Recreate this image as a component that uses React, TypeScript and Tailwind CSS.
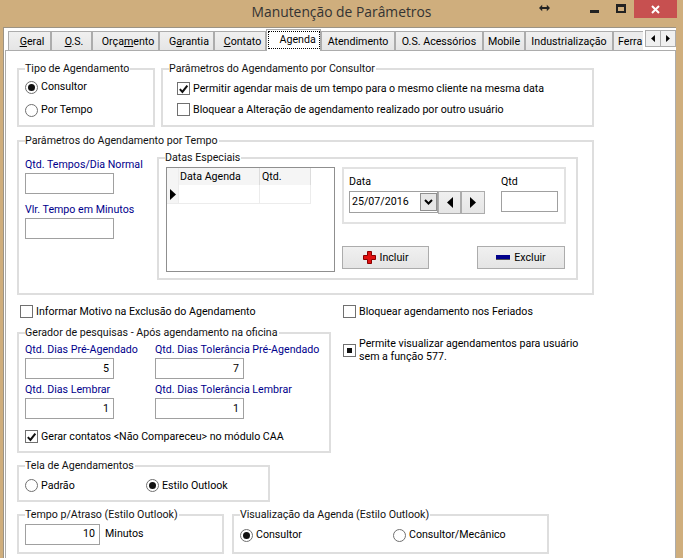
import type { ReactNode } from 'react';

const tabs = [
  { label: 'Geral', u: 0, w: 'w-[43px]' },
  { label: 'O.S.', u: 0, w: 'w-[41px]' },
  { label: 'Orçamento', u: 4, w: 'w-[67px]' },
  { label: 'Garantia', u: 1, w: 'w-[55px]' },
  { label: 'Contato', u: 0, w: 'w-[52px]' },
];
const tabsAfter = [
  { label: 'Atendimento', w: 'w-[74px]' },
  { label: 'O.S. Acessórios', w: 'w-[88px]' },
  { label: 'Mobile', w: 'w-[42px]' },
  { label: 'Industrialização', w: 'w-[88px]' },
];

function Tab({ label, u, w }: { label: string; u?: number; w: string }) {
  return (
    <div className={`${w} flex h-[19px] shrink-0 items-center justify-center border border-b-0 border-[#acacac] bg-gradient-to-b from-[#f0f0f0] to-[#e5e5e5] pt-px whitespace-nowrap`}>
      {u === undefined ? (
        label
      ) : (
        <span className="pl-[5px]">
          {label.slice(0, u)}
          <span className="underline">{label[u]}</span>
          {label.slice(u + 1)}
        </span>
      )}
    </div>
  );
}

function Group({ title, className, children }: { title: string; className: string; children?: ReactNode }) {
  return (
    <div className={`relative shrink-0 border-2 border-[#dedede] ${className}`}>
      <span className="absolute left-[6px] top-[-8px] bg-white pr-px leading-[14px] whitespace-nowrap text-[#111]">{title}</span>
      {children}
    </div>
  );
}

function Check({ checked, mark, label, className = '' }: { checked?: boolean; mark?: boolean; label: ReactNode; className?: string }) {
  return (
    <div className={`flex items-center gap-[3px] ${className}`}>
      <span className="flex h-[13px] w-[13px] shrink-0 items-center justify-center border border-[#707070] bg-white">
        {checked && (
          <svg viewBox="0 0 12 12" className="h-[12px] w-[12px]">
            <path d="M2 6.2 L4.8 9.2 L10.2 2.2" fill="none" stroke="#111" strokeWidth="2.2" />
          </svg>
        )}
        {mark && <span className="h-[5px] w-[5px] bg-[#111]" />}
      </span>
      <span className="leading-[13px]">{label}</span>
    </div>
  );
}

function Radio({ checked, label, className = '' }: { checked?: boolean; label: string; className?: string }) {
  return (
    <div className={`flex items-center gap-[3px] ${className}`}>
      <span className="flex h-[13px] w-[13px] shrink-0 items-center justify-center rounded-full border border-[#707070] bg-white">
        {checked && <span className="h-[7px] w-[7px] rounded-full bg-[#111]" />}
      </span>
      <span className="leading-[14px] whitespace-nowrap">{label}</span>
    </div>
  );
}

function Field({ label, value, className = '' }: { label: string; value?: string; className?: string }) {
  return (
    <div className={`flex flex-col ${className}`}>
      <span className="h-[14px] leading-[14px] whitespace-nowrap text-[#00008b]">{label}</span>
      <div className="mt-px flex h-[21px] w-[89px] items-center justify-end border border-[#a0a0a0] bg-white pr-[4px]">{value}</div>
    </div>
  );
}

function Arrow({ dir, size = 'h-[11px] w-[6px]' }: { dir: 'left' | 'right'; size?: string }) {
  return (
    <svg viewBox="0 0 6 11" className={size}>
      <path d={dir === 'left' ? 'M6 0 L0 5.5 L6 11 Z' : 'M0 0 L6 5.5 L0 11 Z'} fill="#000" />
    </svg>
  );
}

const btn = 'flex items-center justify-center border border-[#acacac] bg-gradient-to-b from-[#f0f0f0] to-[#e5e5e5]';

export default function App() {
  return (
    <div className="h-[558px] w-[683px] overflow-hidden bg-[#cfae7d] text-[10.65px] text-black [font-family:Roboto,sans-serif]">
      {/* title bar */}
      <div className="relative flex h-[27px] items-center justify-center pb-[2px]">
        <span className="text-[13.85px] text-[#333] [font-family:'Open_Sans',sans-serif]">Manutenção de Parâmetros</span>
        <svg viewBox="0 0 12 8" className="absolute left-[539px] top-[4px] h-[8px] w-[11px]">
          <path d="M0 4 L3.5 0.5 V3 H8.5 V0.5 L12 4 L8.5 7.5 V5 H3.5 V7.5 Z" fill="#222" />
        </svg>
        <span className="absolute left-[590px] top-[10px] h-[3px] w-[9px] bg-[#222]" />
        <span className="absolute left-[616px] top-[4px] h-[9px] w-[10px] border-2 border-t-[3px] border-[#222]" />
        <div className="absolute left-[634px] top-0 flex h-[18px] w-[43px] items-center justify-center bg-[#c75050]">
          <svg viewBox="0 0 9 9" className="h-[9px] w-[9px]">
            <path d="M1 1 L8 8 M8 1 L1 8" stroke="#fff" strokeWidth="2" />
          </svg>
        </div>
      </div>

      {/* client area */}
      <div className="ml-[3px] mr-[7px] h-[531px] border-l border-t border-[#9c9384] bg-white pl-[1px]">
        <div className="relative flex h-[22px] items-end pl-[3px]">
          {tabs.map(t => (
            <Tab key={t.label} {...t} />
          ))}
          <div className="relative z-10 mb-[-1px] flex h-[22px] w-[55px] shrink-0 items-start justify-center border border-b-0 border-[#acacac] bg-white pt-px">
            <span className="h-[18px] w-[52px] border border-dotted border-black pl-[11px] leading-[15px]">Agenda</span>
          </div>
          {tabsAfter.map(t => (
            <Tab key={t.label} {...t} />
          ))}
          <div className="flex h-[19px] w-[30px] shrink-0 items-center overflow-hidden border-t border-l border-[#acacac] bg-[#ececec] pl-[4px] pt-px">Ferra</div>
          <div className="absolute right-[15px] top-[2px] flex h-[17px] w-[16px] items-center justify-center border border-[#acacac] bg-[#f0f0f0]">
            <Arrow dir="left" size="h-[7px] w-[4px]" />
          </div>
          <div className="absolute right-0 top-[2px] flex h-[17px] w-[16px] items-center justify-center border border-[#acacac] bg-[#f0f0f0]">
            <Arrow dir="right" size="h-[7px] w-[4px]" />
          </div>
        </div>

        {/* tab page */}
        <div className="flex h-[509px] flex-col border-l border-r border-t border-[#acacac] pl-[11px] pt-[17px]">
          <div className="flex gap-[6px]">
            <Group title="Tipo de Agendamento" className="h-[59px] w-[138px] pl-[6px] pt-[10px]">
              <Radio checked label="Consultor" />
              <Radio label="Por Tempo" className="mt-[9px]" />
            </Group>
            <Group title="Parâmetros do Agendamento por Consultor" className="h-[59px] w-[433px] pl-[14px] pt-[12px]">
              <Check checked label="Permitir agendar mais de um tempo para o mesmo cliente na mesma data" />
              <Check label="Bloquear a Alteração de agendamento realizado por outro usuário" className="mt-[8px]" />
            </Group>
          </div>

          <Group title="Parâmetros do Agendamento por Tempo" className="mt-[13px] flex h-[155px] w-[577px] pl-[6px]">
            <div className="flex w-[132px] shrink-0 flex-col gap-[9px] pt-[16px]">
              <Field label="Qtd. Tempos/Dia Normal" />
              <Field label="Vlr. Tempo em Minutos" />
            </div>
            <Group title="Datas Especiais" className="mt-[15px] flex h-[123px] w-[421px] pl-[7px] pt-[8px]">
              <div className="h-[105px] w-[169px] shrink-0 border border-[#8f8f8f] bg-white">
                <div className="grid w-[144px] grid-cols-[12px_81px_51px] border-b border-[#ececec]">
                  <div className="h-[17px] border-r border-[#ececec] bg-[#f5f5f5]" />
                  <div className="h-[17px] border-r border-[#dcdcdc] bg-[#f5f5f5] pl-px leading-[17px]">Data Agenda</div>
                  <div className="h-[17px] border-r border-[#dcdcdc] bg-[#f5f5f5] pl-[2px] leading-[17px]">Qtd.</div>
                  <div className="flex h-[18px] items-center justify-center border-r border-[#ececec] bg-[#f5f5f5]">
                    <Arrow dir="right" />
                  </div>
                  <div className="h-[18px] border-r border-[#ececec]" />
                  <div className="h-[18px] border-r border-[#ececec]" />
                </div>
              </div>
              <div className="ml-[7px] flex w-[224px] shrink-0 flex-col">
                <div className="flex h-[57px] border-2 border-[#e2e2e2] pl-[5px] pt-[6px]">
                  <div className="flex w-[136px] shrink-0 flex-col">
                    <span className="h-[14px] leading-[14px]">Data</span>
                    <div className="mt-[2px] flex">
                      <div className="flex h-[22px] w-[89px] items-center justify-between border border-[#a0a0a0] pl-[2px]">
                        25/07/2016
                        <span className="flex h-[18px] w-[17px] items-center justify-center border border-[#8f8f8f] bg-[#e6e6e6]">
                          <svg viewBox="0 0 9 6" className="h-[6px] w-[9px]">
                            <path d="M1 1 L4.5 4.5 L8 1" fill="none" stroke="#000" strokeWidth="2" />
                          </svg>
                        </span>
                      </div>
                      <div className={`${btn} h-[23px] w-[23px]`}>
                        <Arrow dir="left" />
                      </div>
                      <div className={`${btn} h-[23px] w-[24px]`}>
                        <Arrow dir="right" />
                      </div>
                    </div>
                  </div>
                  <div className="ml-[16px] flex flex-col">
                    <span className="h-[14px] leading-[14px]">Qtd</span>
                    <div className="mt-[2px] h-[21px] w-[57px] border border-[#a0a0a0] bg-white" />
                  </div>
                </div>
                <div className="mt-[22px] flex justify-between pr-px">
                  <div className={`${btn} h-[23px] w-[87px] gap-[4px]`}>
                    <svg viewBox="0 0 13 13" className="h-[13px] w-[13px]">
                      <path d="M4.5 0.5 H8.5 V4.5 H12.5 V8.5 H8.5 V12.5 H4.5 V8.5 H0.5 V4.5 H4.5 Z" fill="#e01010" stroke="#8a0000" />
                    </svg>
                    Incluir
                  </div>
                  <div className={`${btn} h-[23px] w-[88px] gap-[4px]`}>
                    <span className="h-[5px] w-[14px] border-b border-[#555] bg-[#00008b]" />
                    Excluir
                  </div>
                </div>
              </div>
            </Group>
          </Group>

          <div className="mt-[10px] flex">
            <div className="flex w-[326px] shrink-0 flex-col">
              <Check label="Informar Motivo na Exclusão do Agendamento" className="ml-[3px]" />
              <Group title="Gerador de pesquisas - Após agendamento na oficina" className="mt-[14px] h-[121px] w-[314px] pl-[6px] pt-[9px]">
                <div className="grid w-[290px] grid-cols-[130px_160px] gap-y-[4px]">
                  <Field label="Qtd. Dias Pré-Agendado" value="5" />
                  <Field label="Qtd. Dias Tolerância Pré-Agendado" value="7" />
                  <Field label="Qtd. Dias Lembrar" value="1" />
                  <Field label="Qtd. Dias Tolerância Lembrar" value="1" />
                </div>
                <Check checked label="Gerar contatos <Não Compareceu> no módulo CAA" className="mt-[11px]" />
              </Group>
            </div>
            <div className="flex flex-col">
              <Check label="Bloquear agendamento nos Feriados" />
              <Check mark label={<>Permite visualizar agendamentos para usuário<br />sem a função 577.</>} className="mt-[19px]" />
            </div>
          </div>

          <Group title="Tela de Agendamentos" className="mt-[12px] flex h-[37px] w-[253px] items-center pl-[6px] pt-[4px]">
            <Radio label="Padrão" className="w-[121px]" />
            <Radio checked label="Estilo Outlook" />
          </Group>

          <div className="mt-[12px] flex gap-[8px]">
            <Group title="Tempo p/Atraso (Estilo Outlook)" className="flex h-[40px] w-[207px] items-center pl-[6px]">
              <div className="flex h-[21px] w-[75px] items-center justify-end border border-[#a0a0a0] pr-[4px]">10</div>
              <span className="ml-[5px]">Minutos</span>
            </Group>
            <Group title="Visualização da Agenda (Estilo Outlook)" className="flex h-[40px] w-[317px] items-center pl-[6px] pt-[2px]">
              <Radio checked label="Consultor" className="w-[153px]" />
              <Radio label="Consultor/Mecânico" />
            </Group>
          </div>
        </div>
      </div>
    </div>
  );
}
